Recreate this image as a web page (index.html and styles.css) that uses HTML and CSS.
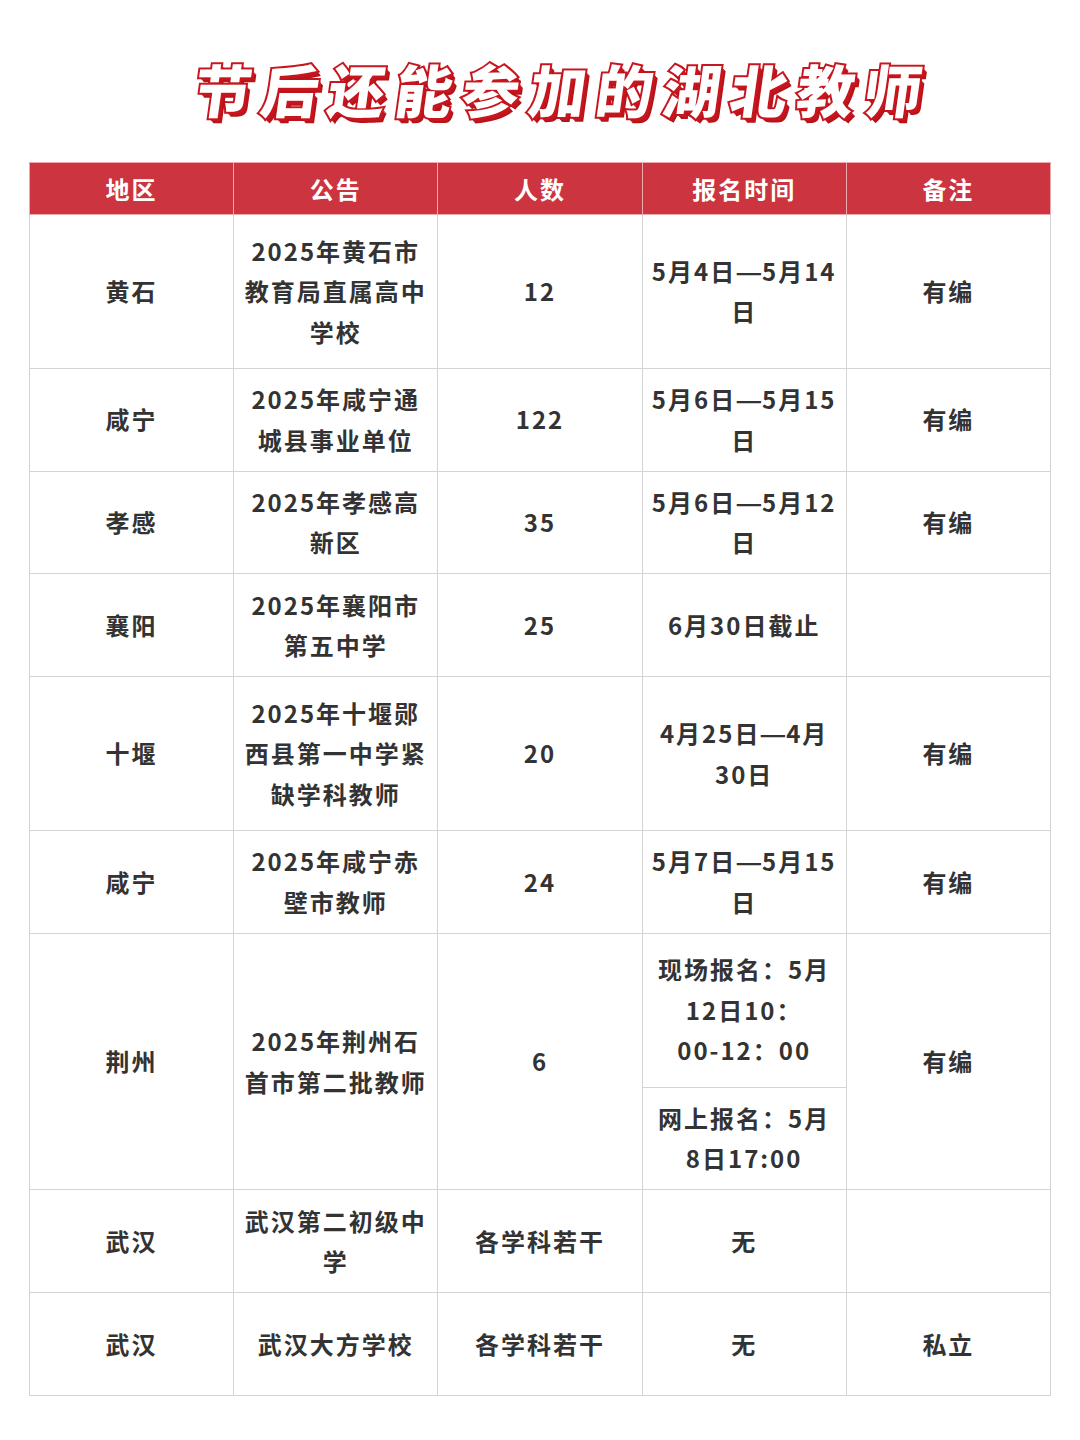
FILE: index.html
```html
<!DOCTYPE html>
<html lang="zh-CN">
<head>
<meta charset="utf-8">
<link rel="stylesheet" href="styles.css">
</head>
<body>
<div class="page">
  <h1 class="title"><span class="title-text">节后还能参加的湖北教师</span></h1>
  <table class="grid">
    <colgroup><col><col><col><col><col></colgroup>
    <thead>
      <tr><th>地区</th><th>公告</th><th>人数</th><th>报名时间</th><th>备注</th></tr>
    </thead>
    <tbody>
      <tr class="tall"><td>黄石</td><td>2025年黄石市<br>教育局直属高中<br>学校</td><td>12</td><td>5月4日<span class="dash">—</span>5月14<br>日</td><td>有编</td></tr>
      <tr><td>咸宁</td><td>2025年咸宁通<br>城县事业单位</td><td>122</td><td>5月6日<span class="dash">—</span>5月15<br>日</td><td>有编</td></tr>
      <tr><td>孝感</td><td>2025年孝感高<br>新区</td><td>35</td><td>5月6日<span class="dash">—</span>5月12<br>日</td><td>有编</td></tr>
      <tr><td>襄阳</td><td>2025年襄阳市<br>第五中学</td><td>25</td><td>6月30日截止</td><td></td></tr>
      <tr class="tall"><td>十堰</td><td>2025年十堰郧<br>西县第一中学紧<br>缺学科教师</td><td>20</td><td>4月25日<span class="dash">—</span>4月<br>30日</td><td>有编</td></tr>
      <tr><td>咸宁</td><td>2025年咸宁赤<br>壁市教师</td><td>24</td><td>5月7日<span class="dash">—</span>5月15<br>日</td><td>有编</td></tr>
      <tr class="tall"><td rowspan="2">荆州</td><td rowspan="2">2025年荆州石<br>首市第二批教师</td><td rowspan="2">6</td><td>现场报名：5月<br>12日10：<br>00-12：00</td><td rowspan="2">有编</td></tr>
      <tr><td>网上报名：5月<br>8日17:00</td></tr>
      <tr><td>武汉</td><td>武汉第二初级中<br>学</td><td>各学科若干</td><td>无</td><td></td></tr>
      <tr><td>武汉</td><td>武汉大方学校</td><td>各学科若干</td><td>无</td><td>私立</td></tr>
    </tbody>
  </table>
</div>
</body>
</html>
```

FILE: styles.css
```css
html, body {
  margin: 0;
  padding: 0;
  background: #ffffff;
}
body {
  font-family: "Noto Sans CJK SC", "Noto Sans", sans-serif;
  width: 1080px;
  height: 1440px;
  overflow: hidden;
}
.page {
  padding: 54px 29px 0 29px;
}
.title {
  margin: 0;
  height: 108px;
  text-align: center;
  font-size: 57px;
  font-weight: 900;
  line-height: 68px;
  padding-left: 46px;
}
.title-text {
  display: inline-block;
  color: #ffffff;
  letter-spacing: 10px;
  transform: skewX(-8deg);
  -webkit-text-stroke: 4px #c8161e;
  paint-order: stroke fill;
  text-shadow:
    1px 1px 0 #c8161e,
    2px 2px 0 #c8161e,
    3px 3px 0 #c8161e,
    4px 4px 0 #b8141b,
    5px 5px 0 #b8141b;
}
.grid {
  width: 1022px;
  table-layout: fixed;
  border-collapse: collapse;
  border: 1.5px solid #d2d2d2;
}
.grid col {
  width: 20%;
}
.grid th {
  background: #cc3440;
  color: #ffffff;
  font-size: 24px;
  font-weight: 700;
  letter-spacing: 2px;
  height: 52px;
  padding: 0;
  border: 1px solid #e9a9ad;
  box-sizing: border-box;
}
.grid td {
  height: 102.8px;
  padding: 10px 4px;
  text-align: center;
  vertical-align: middle;
  font-size: 24px;
  font-weight: 700;
  line-height: 40.5px;
  letter-spacing: 2px;
  color: #333333;
  border: 1px solid #d4d4d4;
  box-sizing: border-box;
}
.grid tr.tall td {
  height: 153.8px;
}
.dash {
  display: inline-block;
  letter-spacing: 0;
  transform: scaleX(1.25);
  margin: 0 2px;
}
```
